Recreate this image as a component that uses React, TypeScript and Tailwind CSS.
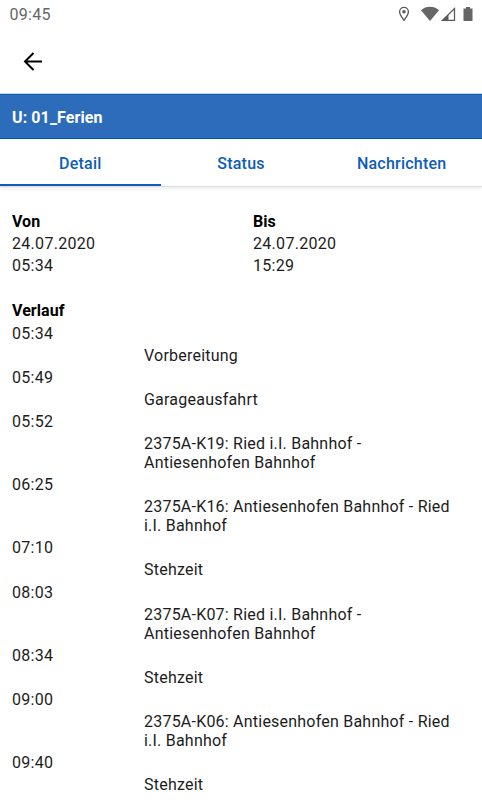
const events = [
  { time: "05:34", text: ["Vorbereitung"] },
  { time: "05:49", text: ["Garageausfahrt"] },
  { time: "05:52", text: ["2375A-K19: Ried i.I. Bahnhof -", "Antiesenhofen Bahnhof"] },
  { time: "06:25", text: ["2375A-K16: Antiesenhofen Bahnhof - Ried", "i.I. Bahnhof"] },
  { time: "07:10", text: ["Stehzeit"] },
  { time: "08:03", text: ["2375A-K07: Ried i.I. Bahnhof -", "Antiesenhofen Bahnhof"] },
  { time: "08:34", text: ["Stehzeit"] },
  { time: "09:00", text: ["2375A-K06: Antiesenhofen Bahnhof - Ried", "i.I. Bahnhof"] },
  { time: "09:40", text: ["Stehzeit"] },
];

function StatusBar() {
  return (
    <div className="flex h-7 shrink-0 items-center justify-between pl-[9.500px] pr-[7px] text-[#666]">
      <span className="pt-[2px] text-[16px] leading-7 tracking-[0.3px]">09:45</span>
      <svg width="80" height="28" viewBox="0 0 80 28" fill="none">
        <path d="M9 20.2C6.7 17.2 4.6 14.8 4.6 11.800a4.400 4.400 0 0 1 8.800 0c0 3-2.100 5.400-4.400 8.400Z" stroke="#5c5c5c" strokeWidth="1.400" />
        <circle cx="9" cy="11.800" r="1.800" fill="#5c5c5c" />
        <path d="M26 10.200C31 5.700 39 5.700 44 10.200L35 21Z" fill="#666" />
        <path d="M59.500 8.500V20.300H47.500Z" stroke="#5c5c5c" strokeWidth="1.300" />
        <path d="M53.500 14.200V20.500H47.200Z" fill="#5c5c5c" />
        <path d="M68.500 8.500H71V7H75V8.500H77.500V21H68.500Z" fill="#666" />
      </svg>
    </div>
  );
}

export default function App() {
  return (
    <div className="flex h-[800px] w-[482px] flex-col overflow-hidden bg-white font-[Roboto,sans-serif] text-[16px] tracking-[0.22px] text-black">
      <StatusBar />
      <header className="flex h-[65px] shrink-0 items-center pl-[21px]">
        <svg width="24" height="24" viewBox="0 0 24 24" fill="none" stroke="#000" strokeWidth="2">
          <path d="M21 12.500H4M12.500 4L4 12.500L12.500 21" />
        </svg>
      </header>
      <div className="flex h-[46px] shrink-0 items-center border-b border-t border-b-[#0653b2] border-t-[#c4d7ec] bg-[#2d6cba] pl-3 pt-[3px] font-bold tracking-[0.1px] text-white shadow-[inset_0_1px_0_#0d5db8]">U: 01_Ferien</div>
      <nav className="grid h-12 shrink-0 grid-cols-3 border-b border-[#dddddd] text-center font-medium leading-[49px] text-[#0d5db8] shadow-[0_2px_4px_rgba(0,0,0,0.08)]">
        <div className="h-[47px] shadow-[inset_0_-2px_0_#0d5db8]">Detail</div>
        <div>Status</div>
        <div>Nachrichten</div>
      </nav>
      <main className="px-3 pt-[24px] text-[#1c1c1c]">
        <div className="grid grid-cols-2 gap-x-6 leading-[22px] tracking-[0.3px]">
          <div><h2 className="font-bold tracking-normal text-black">Von</h2><p>24.07.2020</p><p>05:34</p></div>
          <div><h2 className="font-bold tracking-normal text-black">Bis</h2><p>24.07.2020</p><p>15:29</p></div>
        </div>
        <h2 className="mt-[23px] pb-px font-bold leading-[22px] tracking-[0.05px] text-black">Verlauf</h2>
        {events.map((e) => (
          <div key={e.time} className="pb-[2.050px]">
            <div className="h-[22px] leading-[22px] tracking-[0.3px]">{e.time}</div>
            <div className="ml-[132px] pt-[1px] leading-[19.050px] tracking-[0.220px]">
              {e.text.map((line) => <div key={line} className="whitespace-nowrap">{line}</div>)}
            </div>
          </div>
        ))}
      </main>
    </div>
  );
}
